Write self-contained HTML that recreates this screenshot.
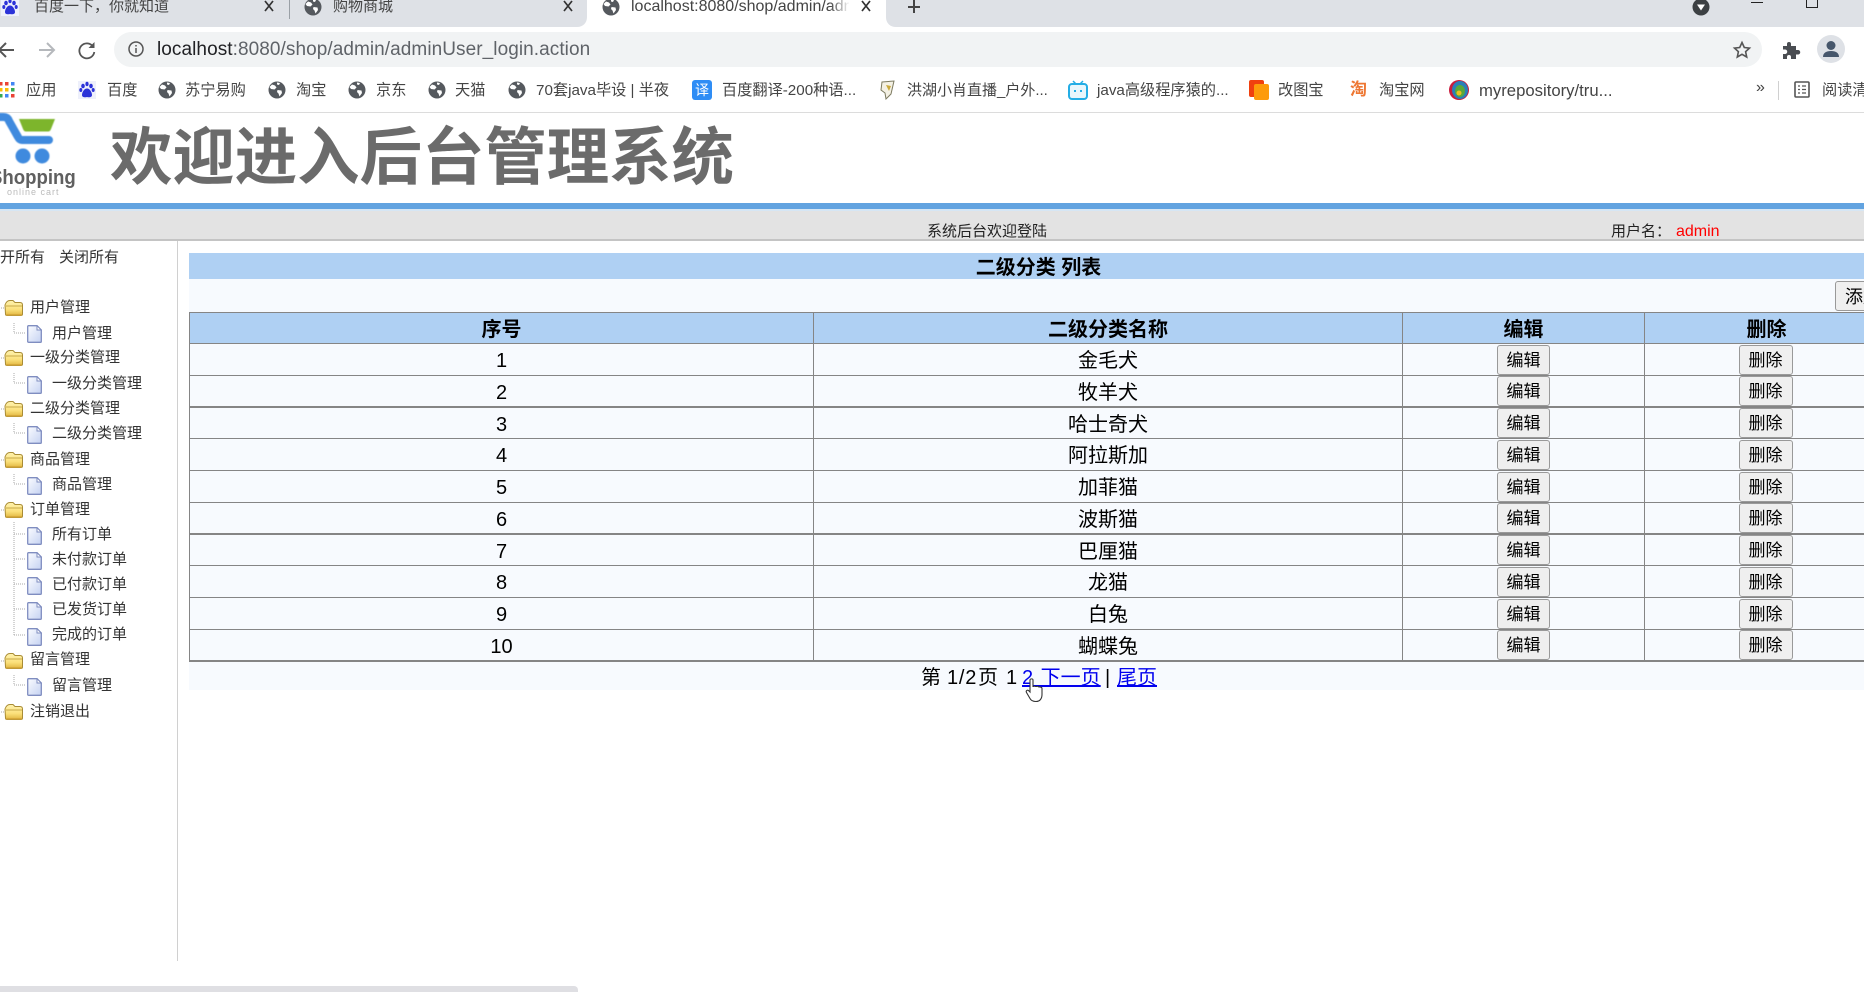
<!DOCTYPE html>
<html lang="zh">
<head>
<meta charset="utf-8">
<title>后台管理系统</title>
<style>
*{box-sizing:border-box}
html,body{margin:0;padding:0;width:1864px;height:992px;overflow:hidden;background:#fff}
body{position:relative;font-family:"Liberation Sans","Noto Sans CJK SC",sans-serif;color:#000}
.t{position:absolute;white-space:nowrap;line-height:20px;font-size:15px;color:#444}
.m{font-size:15.2px}
.a{position:absolute}
svg{display:block;overflow:visible}
.s{color:#333}
table{position:absolute;left:189px;top:312px;width:1699px;border-collapse:separate;border-spacing:0;table-layout:fixed;font-size:20px;text-align:center;background:#f7fafe}
td,th{padding:0;border-top:1px solid #858585;border-left:1px solid #858585;line-height:24px;position:relative;vertical-align:middle}
th{background:#afd0f3;font-weight:bold;height:31px;padding-top:3px}
td{height:32px}
td.x{padding-top:3px}
tr.n td{height:31px}
tr.k td{border-top-width:2px}
tr.e td{border-bottom:2px solid #858585;height:33px}
button{font-family:"Liberation Sans","Noto Sans CJK SC",sans-serif;font-size:17px;line-height:22px;background:#efefef;border:1px solid #999;border-radius:3px;padding:2px 0 0;color:#000;display:block;margin:0 auto;height:30px}
.b1{width:53px}.b2{width:54px;position:relative;left:-1px}
a{color:#0000ee;text-decoration:underline}
.f{position:absolute;top:666px;font-size:20px;line-height:24px;white-space:nowrap;color:#000}
</style>
</head>
<body>
<svg width="0" height="0" style="position:absolute">
  <defs>
    <linearGradient id="fg" x1="0" y1="0" x2="0" y2="1"><stop offset="0" stop-color="#fff3b0"/><stop offset=".6" stop-color="#fbe07a"/><stop offset="1" stop-color="#e0b540"/></linearGradient>
    <linearGradient id="dg" x1="0" y1="0" x2="1" y2="1"><stop offset="0" stop-color="#fbfcff"/><stop offset="1" stop-color="#c5d2f2"/></linearGradient>
  </defs>
  <symbol id="globe" viewBox="0 0 18 18">
    <circle cx="9" cy="9" r="8.5" fill="#55595e"/>
    <path d="M4 3.500l3 1 1.500 2-2 2-3.500-.5-1.500-2zM9 1.500l3 .5-1 2-2-.5zM9.500 9l4 .5 .5 2.500-2.500 3.500-1-3-1.500-1.500z" fill="#fff"/>
  </symbol>
  <symbol id="paw" viewBox="0 0 18 18">
    <rect width="18" height="18" fill="#eef0fb"/>
    <ellipse cx="5" cy="5" rx="1.800" ry="2.300" fill="#2b32d8"/>
    <ellipse cx="13" cy="5" rx="1.800" ry="2.300" fill="#2b32d8"/>
    <ellipse cx="9" cy="3" rx="1.600" ry="2.200" fill="#2b32d8"/>
    <ellipse cx="2.800" cy="9" rx="1.500" ry="2" fill="#2b32d8"/>
    <ellipse cx="15.200" cy="9" rx="1.500" ry="2" fill="#2b32d8"/>
    <path d="M9 7.500c3 0 5 4 5 6.500 0 2.500-3 2.500-5 2-2 .5-5 .5-5-2 0-2.500 2-6.500 5-6.500z" fill="#2b32d8"/>
  </symbol>
  <symbol id="folder" viewBox="0 0 20 18">
    <path d="M1 6c1-3 3-4.500 5-4.500h3l2 2h5c1.500 0 2.500 1 2.500 2.500v9c0 1-.5 1.500-1.500 1.500H3c-1 0-1.500-.5-1.500-1.500z" fill="url(#fg)" stroke="#a98c35"/>
    <path d="M2 7h16" stroke="#c8a94a"/>
    <path d="M2 15h16v1.500H2z" fill="#d7a93a"/>
  </symbol>
  <symbol id="doc" viewBox="0 0 15 18">
    <path d="M.7 1.500C.7 1 1 .7 1.500 .7H10l4.300 4.300v11.500c0 .5-.5 .8-.8 .8h-12c-.5 0-.8-.3-.8-.8z" fill="url(#dg)" stroke="#7f8dc0" stroke-width="1.300"/>
    <path d="M10 .7V5h4.300z" fill="#fff" stroke="#7f8dc0"/>
  </symbol>
</svg>

<!-- tab strip -->
<div class="a" style="left:0;top:0;width:1864px;height:27px;background:#dee1e6"></div>
<div class="a" style="left:587px;top:0;width:299px;height:27px;background:#fff"></div>
<svg class="a" style="left:577px;top:17px" width="10" height="10"><path d="M10 0v10H0c6 0 10-4 10-10z" fill="#fff"/></svg>
<svg class="a" style="left:886px;top:17px" width="10" height="10"><path d="M0 0v10h10C4 10 0 6 0 0z" fill="#fff"/></svg>
<svg class="a" style="left:1px;top:-2px" width="18" height="18"><use href="#paw"/></svg>
<span class="t" style="left:34px;top:-3px">百度一下，你就知道</span>
<svg class="a" style="left:264px;top:1px" width="10" height="11"><path d="M1 0l8 10M9 0L1 10" stroke="#333" stroke-width="1.700" fill="none"/></svg>
<div class="a" style="left:289px;top:0;width:1px;height:19px;background:#9aa0a6"></div>
<svg class="a" style="left:304px;top:-2px" width="18" height="18"><use href="#globe"/></svg>
<span class="t" style="left:333px;top:-3px">购物商城</span>
<svg class="a" style="left:563px;top:1px" width="10" height="11"><path d="M1 0l8 10M9 0L1 10" stroke="#333" stroke-width="1.700" fill="none"/></svg>
<svg class="a" style="left:602px;top:-2px" width="18" height="18"><use href="#globe"/></svg>
<div class="t" style="left:631px;top:-3px;width:218px;overflow:hidden;font-size:16px">localhost:8080/shop/admin/adminUser</div>
<div class="a" style="left:830px;top:0;width:22px;height:20px;background:linear-gradient(to right,rgba(255,255,255,0),#fff 90%)"></div>
<svg class="a" style="left:861px;top:1px" width="10" height="11"><path d="M1 0l8 10M9 0L1 10" stroke="#333" stroke-width="1.700" fill="none"/></svg>
<svg class="a" style="left:907px;top:0" width="14" height="14"><path d="M7 0v13M1 7h12" stroke="#444" stroke-width="2"/></svg>
<svg class="a" style="left:1692px;top:-2px" width="18" height="18"><circle cx="9" cy="9" r="8.500" fill="#3c4043"/><path d="M5 6.500h8l-4 6z" fill="#fff"/></svg>
<div class="a" style="left:1751px;top:2px;width:12px;height:1px;background:#222"></div>
<div class="a" style="left:1806px;top:-4px;width:12px;height:12px;border:1px solid #222"></div>

<!-- toolbar -->
<svg class="a" style="left:-4px;top:40px" width="20" height="20"><path d="M18 10H3M10 3l-7 7 7 7" fill="none" stroke="#555" stroke-width="2"/></svg>
<svg class="a" style="left:37px;top:40px" width="20" height="20"><path d="M2 10h15M10 3l7 7-7 7" fill="none" stroke="#b5b8bc" stroke-width="2"/></svg>
<svg class="a" style="left:77px;top:40px" width="20" height="20"><path d="M16 6.500A7.500 7.500 0 1 0 17.300 12" fill="none" stroke="#555" stroke-width="1.800"/><path d="M17.500 2v6h-6z" fill="#555"/></svg>
<div class="a" style="left:114px;top:32px;width:1648px;height:35px;background:#f1f3f4;border-radius:18px"></div>
<svg class="a" style="left:128px;top:41px" width="16" height="16"><circle cx="8" cy="8" r="7" fill="none" stroke="#555" stroke-width="1.500"/><path d="M8 7v5M8 4v1.500" stroke="#555" stroke-width="1.500"/></svg>
<span class="t" style="left:157px;top:40px;font-size:19px;letter-spacing:.07px;color:#5f6368"><span style="color:#202124">localhost</span>:8080/shop/admin/adminUser_login.action</span>
<svg class="a" style="left:1733px;top:41px" width="18" height="18"><path d="M9 1.500l2.300 5 5.200.6-3.900 3.600 1.100 5.300L9 13.300 4.300 16l1.100-5.300L1.500 7.100l5.200-.6z" fill="none" stroke="#555" stroke-width="1.600"/></svg>
<svg class="a" style="left:1782px;top:41px" width="18" height="18"><path d="M1 5h4V3a2 2 0 0 1 4 0v2h5v4h2a2.200 2.200 0 0 1 0 4.500h-2V18H9v-2a2 2 0 0 0-4 0v2H1v-5h2a2.200 2.200 0 0 0 0-4.500H1z" fill="#4a4d52"/></svg>
<svg class="a" style="left:1817px;top:35px" width="28" height="28"><circle cx="14" cy="14" r="14" fill="#dee1e6"/><circle cx="14" cy="10.500" r="4.500" fill="#46566b"/><path d="M6 22c0-4 3-6 8-6s8 2 8 6z" fill="#46566b"/></svg>

<!-- bookmarks -->
<svg class="a" style="left:-1px;top:82px" width="16" height="16">
  <g fill="#ea4335"><rect x="0" y="0" width="3.500" height="3.500"/><rect x="6" y="0" width="3.500" height="3.500"/></g><rect x="12" y="0" width="3.500" height="3.500" fill="#4285f4"/>
  <g fill="#fbbc05"><rect x="0" y="6" width="3.500" height="3.500"/><rect x="6" y="6" width="3.500" height="3.500"/></g><rect x="12" y="6" width="3.500" height="3.500" fill="#34a853"/>
  <g fill="#34a853"><rect x="0" y="12" width="3.500" height="3.500"/></g><rect x="6" y="12" width="3.500" height="3.500" fill="#4285f4"/><rect x="12" y="12" width="3.500" height="3.500" fill="#ea4335"/>
</svg>
<span class="t m" style="left:26px;top:81px">应用</span>
<svg class="a" style="left:78px;top:81px" width="18" height="18"><use href="#paw"/></svg>
<span class="t m" style="left:107px;top:81px">百度</span>
<svg class="a" style="left:158px;top:81px" width="18" height="18"><use href="#globe"/></svg>
<span class="t m" style="left:185px;top:81px">苏宁易购</span>
<svg class="a" style="left:268px;top:81px" width="18" height="18"><use href="#globe"/></svg>
<span class="t m" style="left:296px;top:81px">淘宝</span>
<svg class="a" style="left:348px;top:81px" width="18" height="18"><use href="#globe"/></svg>
<span class="t m" style="left:376px;top:81px">京东</span>
<svg class="a" style="left:428px;top:81px" width="18" height="18"><use href="#globe"/></svg>
<span class="t m" style="left:455px;top:81px">天猫</span>
<svg class="a" style="left:508px;top:81px" width="18" height="18"><use href="#globe"/></svg>
<span class="t m" style="left:536px;top:81px">70套java毕设 | 半夜</span>
<div class="a" style="left:692px;top:80px;width:20px;height:20px;background:#2f8df5;border-radius:3px;color:#fff;font-size:14px;line-height:20px;text-align:center">译</div>
<span class="t m" style="left:722px;top:81px">百度翻译-200种语...</span>
<svg class="a" style="left:878px;top:80px" width="20" height="20"><path d="M4 2l12-1-3 13-5 5-1-6-4-3z" fill="#f4f1e4" stroke="#7c7a60"/><path d="M8 5l5 1-2 5z" fill="#c9a93d"/></svg>
<span class="t" style="left:907px;top:81px">洪湖小肖直播_户外...</span>
<svg class="a" style="left:1068px;top:80px" width="20" height="20"><path d="M5 1l3 3M15 1l-3 3" stroke="#23ade5" stroke-width="1.500"/><rect x="1" y="4" width="18" height="15" rx="3" fill="#e7f6fc" stroke="#23ade5" stroke-width="2"/><path d="M7 10v2M13 10v2" stroke="#23ade5" stroke-width="2"/></svg>
<span class="t m" style="left:1097px;top:81px">java高级程序猿的...</span>
<svg class="a" style="left:1249px;top:80px" width="20" height="20"><rect x="0" y="0" width="15" height="17" rx="2" fill="#f0400f"/><rect x="5" y="4" width="15" height="16" rx="2" fill="#fd9b0b"/></svg>
<span class="t m" style="left:1278px;top:81px">改图宝</span>
<span class="t" style="left:1350px;top:80px;font-size:17px;font-weight:bold;color:#ee7733">淘</span>
<span class="t m" style="left:1379px;top:81px">淘宝网</span>
<svg class="a" style="left:1449px;top:80px" width="20" height="20"><ellipse cx="10" cy="10" rx="10" ry="10" fill="#c91b3c"/><ellipse cx="11" cy="10" rx="8" ry="9" fill="#2a7fb8"/><ellipse cx="11" cy="11" rx="5" ry="6" fill="#5aa83a"/><circle cx="10" cy="13" r="2.500" fill="#e8c020"/></svg>
<span class="t" style="left:1479px;top:81px;font-size:16.700px">myrepository/tru...</span>
<span class="t" style="left:1756px;top:78px;font-size:16px">»</span>
<div class="a" style="left:1778px;top:81px;width:1px;height:19px;background:#d0d0d0"></div>
<svg class="a" style="left:1794px;top:81px" width="16" height="17"><rect x="1" y="1" width="14" height="15" rx="1" fill="none" stroke="#555" stroke-width="1.600"/><path d="M4 5h2M8 5h4M4 8.500h2M8 8.500h4M4 12h2M8 12h4" stroke="#555" stroke-width="1.300"/></svg>
<span class="t m" style="left:1822px;top:81px">阅读清单</span>
<div class="a" style="left:0;top:112px;width:1864px;height:1px;background:#dcdcdc"></div>

<!-- logo -->
<svg class="a" style="left:0;top:113px;filter:blur(.4px)" width="90" height="90">
  <path d="M19 6h36l-4 10c-.5 1.500-1.500 2.500-3 2.500H26c-1.500 0-2.500-1-3-2.500z" fill="#7db52c"/>
  <path d="M-4 4h7c3 0 5 1 6 4l9 16c1 2 2 3 4 3h27" fill="none" stroke="#3f8ade" stroke-width="8" stroke-linecap="round" stroke-linejoin="round"/>
  <circle cx="23" cy="43" r="7.500" fill="#3f8ade"/>
  <circle cx="42" cy="43" r="7.500" fill="#3f8ade"/>
</svg>
<span class="t" style="left:-10px;top:166px;font-size:20px;line-height:24px;color:#606060;font-weight:bold;transform:scaleX(.93);transform-origin:0 50%;filter:blur(.3px)">Shopping</span>
<span class="t" style="left:7px;top:186px;font-size:9px;line-height:12px;letter-spacing:1px;color:#bbb">online cart</span>
<span class="t" style="left:110px;top:122px;font-size:62.400px;line-height:74px;font-weight:bold;color:#6b6b6b;filter:blur(.35px)">欢迎进入后台管理系统</span>

<!-- header band -->
<div class="a" style="left:0;top:203px;width:1864px;height:6px;background:#62a3e0"></div>
<div class="a" style="left:0;top:209px;width:1864px;height:2px;background:#d6e6f4"></div>
<div class="a" style="left:0;top:211px;width:1864px;height:28px;background:#e3e3e3"></div>
<div class="a" style="left:0;top:239px;width:1864px;height:2px;background:#c4c4c4"></div>
<span class="t" style="left:927px;top:221px;color:#222;line-height:22px">系统后台欢迎登陆</span>
<span class="t" style="left:1611px;top:221px;color:#222;line-height:22px">用户名：</span>
<span class="t" style="left:1676px;top:221px;color:#f00;font-size:16px;line-height:22px">admin</span>

<!-- sidebar -->
<div class="a" style="left:177px;top:241px;width:1px;height:720px;background:#d0d0d0"></div>
<span class="t s" style="left:-15px;top:248px">展开所有</span>
<span class="t s" style="left:59px;top:248px">关闭所有</span>
<svg class="a" style="left:0;top:0" width="30" height="760">
  <g stroke="#aaa" stroke-dasharray="1 1" fill="none">
    <path d="M1 308h5M1 358h5M1 409h5M1 460h5M1 510h5M1 661h5M1 712h5"/>
    <path d="M14 323v10h12M14 373v10h12M14 423v10h12M14 474v10h12M14 675v10h12"/>
    <path d="M14 522v113M14 534h12M14 559h12M14 584h12M14 609h12M14 635h12"/>
  </g>
</svg>
<svg class="a" style="left:4px;top:299px" width="20" height="18"><use href="#folder"/></svg>
<svg class="a" style="left:4px;top:349px" width="20" height="18"><use href="#folder"/></svg>
<svg class="a" style="left:4px;top:400px" width="20" height="18"><use href="#folder"/></svg>
<svg class="a" style="left:4px;top:451px" width="20" height="18"><use href="#folder"/></svg>
<svg class="a" style="left:4px;top:501px" width="20" height="18"><use href="#folder"/></svg>
<svg class="a" style="left:4px;top:652px" width="20" height="18"><use href="#folder"/></svg>
<svg class="a" style="left:4px;top:703px" width="20" height="18"><use href="#folder"/></svg>
<svg class="a" style="left:27px;top:325px" width="15" height="18"><use href="#doc"/></svg>
<svg class="a" style="left:27px;top:376px" width="15" height="18"><use href="#doc"/></svg>
<svg class="a" style="left:27px;top:426px" width="15" height="18"><use href="#doc"/></svg>
<svg class="a" style="left:27px;top:477px" width="15" height="18"><use href="#doc"/></svg>
<svg class="a" style="left:27px;top:527px" width="15" height="18"><use href="#doc"/></svg>
<svg class="a" style="left:27px;top:552px" width="15" height="18"><use href="#doc"/></svg>
<svg class="a" style="left:27px;top:577px" width="15" height="18"><use href="#doc"/></svg>
<svg class="a" style="left:27px;top:602px" width="15" height="18"><use href="#doc"/></svg>
<svg class="a" style="left:27px;top:628px" width="15" height="18"><use href="#doc"/></svg>
<svg class="a" style="left:27px;top:678px" width="15" height="18"><use href="#doc"/></svg>
<span class="t s" style="left:30px;top:298px">用户管理</span>
<span class="t s" style="left:52px;top:324px">用户管理</span>
<span class="t s" style="left:30px;top:348px">一级分类管理</span>
<span class="t s" style="left:52px;top:374px">一级分类管理</span>
<span class="t s" style="left:30px;top:399px">二级分类管理</span>
<span class="t s" style="left:52px;top:424px">二级分类管理</span>
<span class="t s" style="left:30px;top:450px">商品管理</span>
<span class="t s" style="left:52px;top:475px">商品管理</span>
<span class="t s" style="left:30px;top:500px">订单管理</span>
<span class="t s" style="left:52px;top:525px">所有订单</span>
<span class="t s" style="left:52px;top:550px">未付款订单</span>
<span class="t s" style="left:52px;top:575px">已付款订单</span>
<span class="t s" style="left:52px;top:600px">已发货订单</span>
<span class="t s" style="left:52px;top:625px">完成的订单</span>
<span class="t s" style="left:30px;top:650px">留言管理</span>
<span class="t s" style="left:52px;top:676px">留言管理</span>
<span class="t s" style="left:30px;top:702px">注销退出</span>

<!-- main -->
<div class="a" style="left:189px;top:253px;width:1699px;height:26px;background:#afd0f3;text-align:center;font-size:20px;font-weight:bold;line-height:31px;overflow:hidden">二级分类&nbsp;列表</div>
<div class="a" style="left:189px;top:279px;width:1699px;height:33px;background:#f7fafe"></div>
<button class="a" style="left:1835px;top:281px;width:60px;height:30px;font-size:18px;text-align:left;padding-left:9px;margin:0">添加</button>
<table>
<colgroup><col style="width:624px"><col style="width:589px"><col style="width:242px"><col style="width:244px"></colgroup>
<tr><th>序号</th><th>二级分类名称</th><th>编辑</th><th>删除</th></tr>
<tr><td class="x">1</td><td class="x">金毛犬</td><td><button class="b1">编辑</button></td><td><button class="b2">删除</button></td></tr>
<tr class="n"><td class="x">2</td><td class="x">牧羊犬</td><td><button class="b1">编辑</button></td><td><button class="b2">删除</button></td></tr>
<tr class="k"><td class="x">3</td><td class="x">哈士奇犬</td><td><button class="b1">编辑</button></td><td><button class="b2">删除</button></td></tr>
<tr><td class="x">4</td><td class="x">阿拉斯加</td><td><button class="b1">编辑</button></td><td><button class="b2">删除</button></td></tr>
<tr><td class="x">5</td><td class="x">加菲猫</td><td><button class="b1">编辑</button></td><td><button class="b2">删除</button></td></tr>
<tr class="n"><td class="x">6</td><td class="x">波斯猫</td><td><button class="b1">编辑</button></td><td><button class="b2">删除</button></td></tr>
<tr class="k"><td class="x">7</td><td class="x">巴厘猫</td><td><button class="b1">编辑</button></td><td><button class="b2">删除</button></td></tr>
<tr><td class="x">8</td><td class="x">龙猫</td><td><button class="b1">编辑</button></td><td><button class="b2">删除</button></td></tr>
<tr><td class="x">9</td><td class="x">白兔</td><td><button class="b1">编辑</button></td><td><button class="b2">删除</button></td></tr>
<tr class="e"><td class="x">10</td><td class="x">蝴蝶兔</td><td><button class="b1">编辑</button></td><td><button class="b2">删除</button></td></tr>
</table>
<div class="a" style="left:189px;top:662px;width:1699px;height:28px;background:#f7fafe"></div>
<span class="f" style="left:921px">第</span>
<span class="f" style="left:947px;letter-spacing:.8px">1/2</span>
<span class="f" style="left:978px">页</span>
<span class="f" style="left:1006px">1</span>
<a class="f" href="#" style="left:1022px;word-spacing:2px;color:#0000ee">2 下一页</a>
<span class="f" style="left:1105px">|</span>
<a class="f" href="#" style="left:1117px;color:#0000ee">尾页</a>
<svg class="a" style="left:1025px;top:678px" width="20" height="26"><path d="M5 2c0-1.500 3-1.500 3 0v7c0-1 3-1 3 0 0-1 3-1 3 .5 0-1 3-.5 3 1v6c0 4-2 7-6 7-3 0-5-1-6-3l-3.500-6c-1-2 1-3 2.500-1.500l1 1z" fill="#fff" stroke="#333" stroke-width="1.100"/></svg>

<!-- scrollbar -->
<div class="a" style="left:0;top:986px;width:578px;height:6px;background:#dfdfe3;border-radius:0 4px 0 0"></div>
</body>
</html>
